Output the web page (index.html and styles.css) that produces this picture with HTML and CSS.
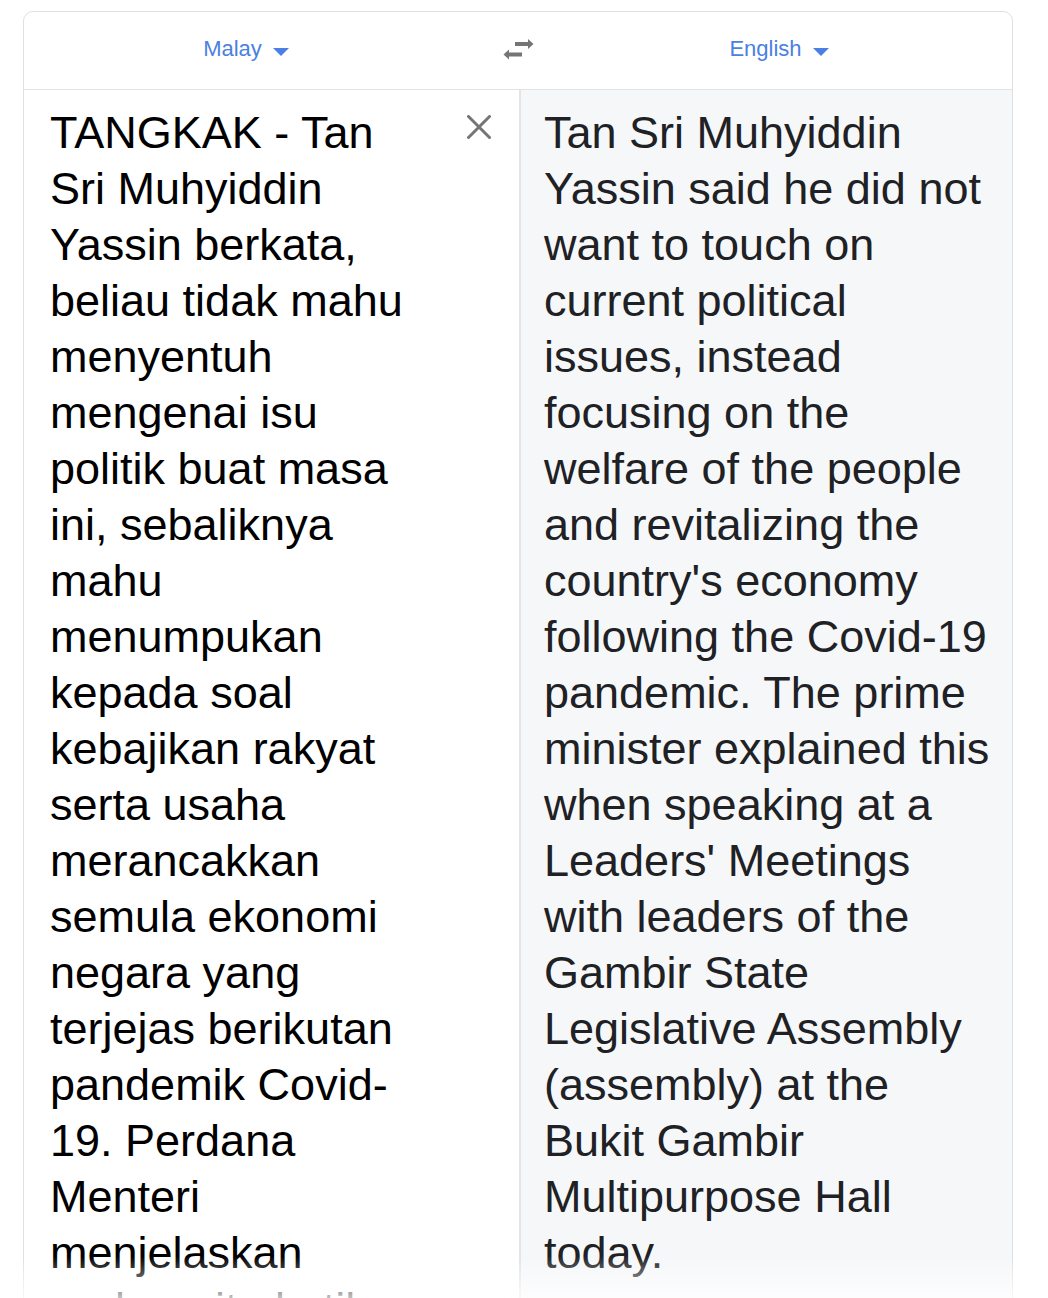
FILE: index.html
```html
<!DOCTYPE html>
<html lang="en">
<head>
<meta charset="utf-8">
<title>Translate</title>
<link rel="stylesheet" href="styles.css">
</head>
<body>
<div class="card">
  <div class="bar">
    <div class="lang lang-src"><span class="lang-name">Malay</span><span class="caret"></span></div>
    <div class="swap">
      <svg width="32" height="24" viewBox="0 0 32 24" aria-hidden="true">
        <rect x="13" y="5" width="15" height="4" fill="#757575"/>
        <polygon points="26,2 31.5,7 26,12" fill="#757575"/>
        <rect x="5" y="15.5" width="15" height="4" fill="#757575"/>
        <polygon points="7,12.5 1.5,17.5 7,22.5" fill="#757575"/>
      </svg>
    </div>
    <div class="lang lang-tgt"><span class="lang-name">English</span><span class="caret"></span></div>
  </div>
  <div class="panes">
    <div class="pane pane-src">
      <p class="text text-src">TANGKAK - Tan Sri Muhyiddin Yassin berkata, beliau tidak mahu menyentuh mengenai isu politik buat masa ini, sebaliknya mahu menumpukan kepada soal kebajikan rakyat serta usaha merancakkan semula ekonomi negara yang terjejas berikutan pandemik Covid-<wbr>19. Perdana Menteri menjelaskan perkara itu ketika berucap pada Majlis Ramah Mesra bersama pemimpin.</p>
      <button class="clear" aria-label="Clear">
        <svg width="24" height="24" viewBox="0 0 24 24"><path d="M1.5 1.5 L22.5 22.5 M22.5 1.5 L1.5 22.5" stroke="#757575" stroke-width="3" stroke-linecap="round"/></svg>
      </button>
    </div>
    <div class="pane pane-tgt">
      <p class="text text-tgt">Tan Sri Muhyiddin Yassin said he did not want to touch on current political issues, instead focusing on the welfare of the people and revitalizing the country's economy following the Covid-19 pandemic. The prime minister explained this when speaking at a Leaders' Meetings with leaders of the Gambir State Legislative Assembly (assembly) at the Bukit Gambir Multipurpose Hall today.</p>
    </div>
  </div>
</div>
<div class="fade"></div>
</body>
</html>
```
FILE: styles.css
```css
html, body {
  margin: 0;
  padding: 0;
  background: #ffffff;
  font-family: "Liberation Sans", Arial, sans-serif;
}

body {
  height: 1298px;
  overflow: hidden;
}

.card {
  margin: 11px 35px 0 23px;
  border: 1px solid #dfe0e3;
  border-radius: 10px;
  overflow: hidden;
}

.bar {
  display: grid;
  grid-template-columns: 444px 100px 1fr;
  height: 77px;
  border-bottom: 1px solid #e2e3e5;
  align-items: center;
}

.lang {
  display: flex;
  align-items: center;
  justify-content: center;
  color: #4a7fe3;
  font-size: 22px;
  padding-bottom: 3px;
}

.lang-tgt {
  padding-right: 22px;
}

.caret {
  width: 0;
  height: 0;
  margin-left: 11px;
  margin-top: 6px;
  border-left: 8px solid transparent;
  border-right: 8px solid transparent;
  border-top: 8px solid #4a7fe3;
}

.swap {
  display: flex;
  justify-content: center;
  align-items: center;
  padding-bottom: 4px;
}

.swap svg {
  display: block;
}

.panes {
  display: grid;
  grid-template-columns: 495px 1fr;
  min-height: 1300px;
}

.pane-src {
  display: flex;
  justify-content: space-between;
  align-items: flex-start;
  padding: 15px 28px 0 26px;
  background: #ffffff;
}

.pane-tgt {
  border-left: 2px solid #e3e4e6;
  background: #f6f7f9;
  padding: 15px 20px 0 23px;
}

.text {
  margin: 0;
  font-size: 45px;
  line-height: 56px;
}

.text-src {
  width: 370px;
  color: #000000;
}

.text-tgt {
  color: #202124;
}

.clear {
  margin: 10px 0 0 0;
  padding: 0;
  border: 0;
  background: none;
  width: 24px;
  height: 24px;
  cursor: pointer;
}

.clear svg {
  display: block;
}

.fade {
  position: fixed;
  left: 0;
  right: 0;
  bottom: 0;
  height: 42px;
  background: linear-gradient(to bottom, rgba(255,255,255,0), rgba(255,255,255,0.75));
  pointer-events: none;
}
```
